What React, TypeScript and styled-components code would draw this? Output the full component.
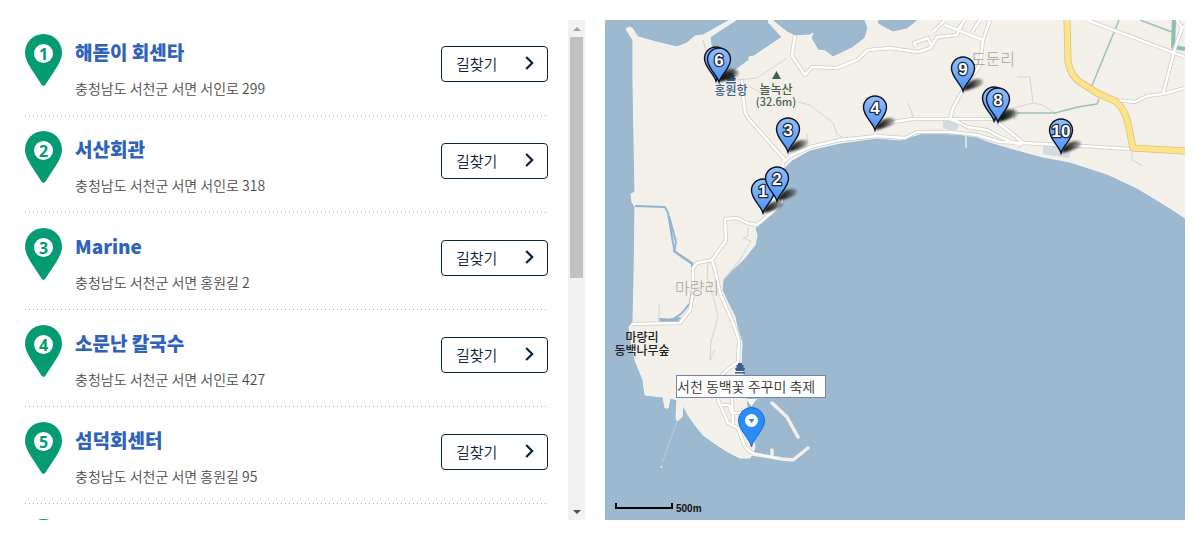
import React, { useCallback, useRef, useState } from "react";
import styled, { createGlobalStyle } from "styled-components";

const GlobalStyle = createGlobalStyle`
  *, *::before, *::after { box-sizing: border-box; }
  body {
    margin: 0;
    background: #fff;
    color: #4c4c4c;
    font-family: "Noto Sans CJK KR", "Noto Sans", sans-serif;
  }
`;

const Page = styled.main`
  display: grid;
  grid-template-columns: minmax(0, 1fr) minmax(0, 1fr);
  gap: 20px;
  padding: 20px 18px 16px 5px;
`;

const ListPanel = styled.section`
  display: flex;
  height: 500px;
`;

const ScrollArea = styled.div`
  flex: 1;
  overflow-y: auto;
  scrollbar-width: none;
`;

const PlaceList = styled.ul`
  display: grid;
  gap: 1px;
  margin: 0;
  padding: 0 20px;
  list-style: none;
`;

const PlaceRow = styled.li`
  display: flex;
  align-items: flex-start;
  gap: 12px;
  height: 96px;
  padding-top: 14px;
  background: repeating-linear-gradient(90deg, #a8a8a8 0 1px, transparent 1px 4px) left bottom / 100% 1px no-repeat;
`;

const PinIcon = styled.svg`
  flex: none;
  display: block;
  width: 38px;
  height: 53px;
  font: 700 16px "Open Sans", sans-serif;
`;

const PlaceInfo = styled.div`
  flex: 1;
  min-width: 0;
`;

const PlaceName = styled.h3`
  margin: 4px 0 10px;
  color: #2f62bb;
  font-size: 19px;
  font-weight: 900;
  line-height: 28px;
`;

const Address = styled.p`
  margin: 0;
  font-size: 14px;
  font-weight: 350;
  line-height: 24px;
`;

const RouteButton = styled.button`
  display: flex;
  align-items: center;
  justify-content: space-between;
  width: 107px;
  height: 36px;
  margin-top: 12px;
  padding: 0 13px 2px 14px;
  border: 1px solid #0b2342;
  border-radius: 4px;
  background: #fff;
  color: #0b1c40;
  font: 350 15px "Noto Sans CJK KR", sans-serif;
  cursor: pointer;
`;

const ScrollBar = styled.div`
  display: flex;
  flex-direction: column;
  width: 17px;
  background: #f1f1f1;
`;

const ScrollStep = styled.button`
  display: grid;
  place-items: center;
  width: 17px;
  height: 17px;
  padding: 0;
  border: 0;
  background: transparent;
`;

const Track = styled.div`
  flex: 1;
  padding: 0 2px;
`;

const Thumb = styled.div`
  height: 241px;
  background: #c1c1c1;
`;

const MapPanel = styled.section`
  position: relative;
  height: 500px;
  overflow: hidden;
  background: #9db9d0;
`;

const MapCanvas = styled.div`
  position: relative;
  width: 580px;
  height: 500px;
  margin: 0 auto;
`;

const MapDrawing = styled.svg`
  display: block;
  overflow: visible;
`;

const InfoWindow = styled.div`
  position: absolute;
  left: 71px;
  top: 355px;
  width: 150px;
  height: 23px;
  border: 1px solid #7485a8;
  background: #fff;
  color: #333;
  font-size: 14px;
  font-weight: 350;
  line-height: 20px;
  white-space: nowrap;
`;

type Place = { name?: string; address?: string };

const places: Place[] = [
  { name: "해돋이 회센타", address: "충청남도 서천군 서면 서인로 299" },
  { name: "서산회관", address: "충청남도 서천군 서면 서인로 318" },
  { name: "Marine", address: "충청남도 서천군 서면 홍원길 2" },
  { name: "소문난 칼국수", address: "충청남도 서천군 서면 서인로 427" },
  { name: "섬덕회센터", address: "충청남도 서천군 서면 홍원길 95" },
  {}, {}, {}, {}, {},
];

function NumberPin({ n }: { n: number }) {
  return (
    <PinIcon viewBox="0 0 38 53" aria-hidden="true">
      <path d="M18.500 0C8 .2 0 8.600 0 18.600C0 24.500 3 29.500 6 34.500L16.500 50.500Q18.500 53.300 20.500 50.500L31 34.500C34 29.500 37 24.500 37 18.600C37 8.600 29 .2 18.500 0Z" fill="#049b73" />
      <circle cx="18.500" cy="19.500" r="9.500" fill="#fff" />
      {n <= 5 && <text x="18.500" y="25.500" textAnchor="middle" fill="#049b73">{n}</text>}
    </PinIcon>
  );
}

function PlaceItem({ n, place }: { n: number; place: Place }) {
  return (
    <PlaceRow>
      <NumberPin n={n} />
      {place.name && (
        <>
          <PlaceInfo>
            <PlaceName>{place.name}</PlaceName>
            <Address>{place.address}</Address>
          </PlaceInfo>
          <RouteButton type="button">
            길찾기
            <svg width="9" height="14" viewBox="0 0 9 14" fill="none" stroke="#0b1f4d" strokeWidth="2.2" aria-hidden="true">
              <path d="M1.200 1L7.200 7L1.200 13" />
            </svg>
          </RouteButton>
        </>
      )}
    </PlaceRow>
  );
}

const LAND =
  "M21 9L24 7L27 8L33 17L55 23L72 27L82 23L90 16L98 15L125 0H131L105 17L107 32L116 48L128 52L144 40L144 37L149 36L177 17L163 2L164 0H167L182 12L190 16L205 15L208 13L206 18L213 30L220 31L228 37L247 28L260 18L263 8L260 0H273L272 3L280 8L288 12L302 9L313 0H580V198L565 188L532 168L502 154L465 142L438 137L405 128L385 122L372 117L352 114L318 113L308 116L295 120L272 118L235 123L205 130L187 140L178 149L176 160L178 176L177 183L162 197L150 208L152 215L150 225L138 240L127 250L118 260L117 270L123 283L130 297L132 307L137 323L136 345L138 355L142 387L150 427L148 433L145 438H135L123 432L112 425L98 415L90 405L83 395L78 385L77 397L72 401L71 397L72 380L65 378L63 388H60L58 377L40 375L38 360L30 340L27 327L24 307L28 302L29 260L30 187L27 182L26 174L30 172L28 62V20Z";

const ROADS = [
  "M526 129L477 126L418 123L395 122L372 115L345 112H312L300 118L272 116L235 120L205 127L185 136L178 142L176 160L173 187L152 205L142 203L132 198L120 199L121 220L107 240L92 243L88 248V273L85 290L75 303L27 304",
  "M107 240L110 250L115 273L128 303L134 320L133 342L122 350L117 355L113 380L123 403L133 408L140 427L147 433",
  "M127 377L128 404M115 385H124L127 393H136V400",
  "M137 60L138 75L140 92L143 98L180 140",
  "M190 16L188 28L187 36L200 55L207 47L232 48L252 40L263 30L285 28L313 32L325 28L332 17L352 15L358 2",
  "M328 12L340 0M340 5L378 20M385 0L378 20L375 45L358 70L348 88L345 99M367 12L375 0M352 10L360 0M311 27L309 23L323 18L326 25",
  "M270 116L272 108L288 102L308 99H345L388 99M345 99L355 103L362 107L382 110L395 117L412 124",
  "M392 102L405 112L418 123L412 126",
  "M482 0L580 37M510 80L530 82L542 76L558 74L580 68M572 0L577 8L570 28L558 74M580 6L577 8",
];

const PATHS = [
  "M412 57L425 57L428 83M410 100L408 88L428 83L438 85L450 93M527 130V140L538 146",
  "M193 82L205 85L228 103L232 114L238 118M303 83L309 99M202 113V122M132 60L152 58L182 38M144 66L158 74",
  "M103 243L102 257L110 283L113 297L106 322L105 340L110 330M143 207V216L138 218L146 221L135 240L118 260M54 285V302M98 20L103 38H107",
];

type MarkerData = { x: number; y: number; label?: string };

const markers: MarkerData[] = [
  { x: 358, y: 71, label: "9" },
  { x: 111, y: 61 },
  { x: 114, y: 62, label: "6" },
  { x: 389, y: 101 },
  { x: 393, y: 102, label: "8" },
  { x: 270, y: 110, label: "4" },
  { x: 183, y: 132, label: "3" },
  { x: 456, y: 133, label: "10" },
  { x: 158, y: 193, label: "1" },
  { x: 172, y: 181, label: "2" },
];

function Marker({ x, y, label }: MarkerData) {
  return (
    <g transform={`translate(${x} ${y})`}>
      <path d="M0 0C2 -6 8 -12 15 -12C23 -12 21 -6 14 -4C9 -2 4 -1 0 0Z" fill="url(#shade)" filter="url(#soft)" />
      <path d="M0 0C-2 -7 -11.500 -14 -11.500 -22.500A11.500 11.500 0 0 1 11.500 -22.500C11.500 -14 2 -7 0 0Z" fill="url(#marker)" stroke="#0c1220" strokeWidth="1.400" />
      {label && (
        <text x="0" y="-16" textAnchor="middle" fontFamily="Liberation Sans, sans-serif" fontSize="17" fontWeight="700" fill="#fff" stroke="#1a2740" strokeWidth="2.500" strokeLinejoin="round" paintOrder="stroke">
          {label}
        </text>
      )}
    </g>
  );
}

function Ferry({ x, y }: { x: number; y: number }) {
  return (
    <g transform={`translate(${x} ${y})`} fill="#3d5f88">
      <path d="M-2 -5H2V-3H3.500V0H5L4 3H-4L-5 0H-3.500V-3H-2Z" />
      <path d="M-5 4H5V5.500H-5Z" />
    </g>
  );
}

function CoastMap() {
  return (
    <MapDrawing width="580" height="500" viewBox="0 0 580 500" role="img" aria-label="지도">
      <defs>
        <linearGradient id="marker" x1="0" y1="0" x2="0" y2="1">
          <stop offset="0" stopColor="#93bffa" />
          <stop offset="1" stopColor="#4d92f5" />
        </linearGradient>
        <linearGradient id="shade" x1="0" y1="0" x2="1" y2="0">
          <stop offset="0" stopColor="#000" />
          <stop offset=".5" stopColor="#222" stopOpacity=".85" />
          <stop offset="1" stopColor="#333" stopOpacity=".3" />
        </linearGradient>
        <filter id="soft" x="-20%" y="-30%" width="150%" height="160%">
          <feGaussianBlur stdDeviation=".9" />
        </filter>
      </defs>
      <path d={LAND} fill="#f2f0e9" stroke="#f7f6f1" />
      <path d="M338 100H353V109L346 111L338 108ZM438 125H450L467 128L464 138L438 134Z" fill="#d2dae2" />
      <path d="M30 186L60 187L63 193L68 223L70 232L87 244V270L85 283L77 293L67 300L55 299" fill="none" stroke="#93b4d0" strokeWidth="2" />
      <path d="M64 196L71 222L69 231L87 243V262" fill="none" stroke="#93b4d0" strokeWidth="2" />
      <path d="M54 298L62 299L76 297L73 302H54Z" fill="#93b4d0" />
      <g fill="none" strokeLinejoin="round">
        {PATHS.map((d) => <path key={d} d={d} stroke="#d5d3cd" />)}
        <path d="M514 0L486 68M494 79L492 84L473 87L450 93L412 93M535 0L567 12" stroke="#9bc4b2" strokeWidth="1.500" />
        <path d="M569 0L568 27L580 29" stroke="#8fbdb5" strokeWidth="4" />
        {ROADS.map((d) => <path key={d} d={d} stroke="#cfcdc8" strokeWidth="4" />)}
        {ROADS.map((d) => <path key={d} d={d} stroke="#fff" strokeWidth="2.500" />)}
        <path d="M462 0L463 42C465 52 469 58 475 62L492 73L510 81C523 91 523 105 528 128L580 131" stroke="#d9c27c" strokeWidth="7" />
        <path d="M462 0L463 42C465 52 469 58 475 62L492 73L510 81C523 91 523 105 528 128L580 131" stroke="#fde48a" strokeWidth="5.500" />
        <path d="M148 434L177 439L188 440L203 428M167 430V437M167 383L182 397L188 408L193 417" stroke="#f2f0e9" strokeWidth="3.500" strokeLinecap="round" />
        <path d="M147 433L172 438" stroke="#fff" strokeWidth="1.500" />
        <path d="M72 401L57 443" stroke="#b9cddd" />
        <path d="M56 446L57 448M361 113V128" stroke="#e2e8ea" strokeWidth="1.500" />
      </g>
      <g textAnchor="middle" fontFamily="Noto Sans CJK KR, sans-serif" fontSize="12">
        <text x="92" y="274" fontSize="16" fontWeight="300" fill="#a5a29c">마량리</text>
        <text x="388" y="45" fontSize="16" fontWeight="300" fill="#a5a29c">도둔리</text>
        <text x="126" y="75" fontWeight="500" fill="#3f6288">홍원항</text>
        <text fontWeight="500" fill="#485d4d">
          <tspan x="171" y="74">놀녹산</tspan>
          <tspan x="171" y="86" fontSize="11">(32.6m)</tspan>
        </text>
        <text fill="#222" fontWeight="500">
          <tspan x="37" y="322">마량리</tspan>
          <tspan x="37" y="335">동백나무숲</tspan>
        </text>
      </g>
      <path d="M171.500 51L176 59H167Z" fill="#485d4d" />
      <Ferry x={126} y={58} />
      <Ferry x={135} y={348} />
      {markers.map((m) => <Marker key={`${m.x}-${m.y}`} {...m} />)}
      <path d="M141 379H152L146.500 386Z" fill="#fff" />
      <path d="M146.500 427C145 419 133.500 410 133.500 400.500A13 13 0 0 1 159.500 400.500C159.500 410 148 419 146.500 427Z" fill="#2a8cf8" stroke="#1e68c4" />
      <circle cx="146.500" cy="400.500" r="6.500" fill="#fff" />
      <path d="M143.500 399H149.500L146.500 403Z" fill="#2a8cf8" />
      <path d="M11 483V488H67V483" fill="none" stroke="#000" strokeWidth="2" />
      <text x="71" y="492" fontFamily="Liberation Sans, sans-serif" fontSize="10" fontWeight="700" fill="#111">500m</text>
    </MapDrawing>
  );
}

export default function App() {
  const area = useRef<HTMLDivElement>(null);
  const [offset, setOffset] = useState(0);

  const handleScroll = useCallback(() => {
    const el = area.current;
    if (el) setOffset((el.scrollTop / Math.max(1, el.scrollHeight - el.clientHeight)) * 225);
  }, []);

  const step = (amount: number) => area.current?.scrollBy({ top: amount });

  return (
    <>
      <GlobalStyle />
      <Page>
        <ListPanel>
          <ScrollArea ref={area} onScroll={handleScroll}>
            <PlaceList>
              {places.map((place, i) => <PlaceItem key={i} n={i + 1} place={place} />)}
            </PlaceList>
          </ScrollArea>
          <ScrollBar>
            <ScrollStep type="button" aria-label="위로" onClick={() => step(-97)}>
              <svg width="8" height="4" viewBox="0 0 8 4" aria-hidden="true"><path d="M0 4L4 0L8 4Z" fill="#a3a3a3" /></svg>
            </ScrollStep>
            <Track>
              <Thumb style={{ transform: `translateY(${offset}px)` }} />
            </Track>
            <ScrollStep type="button" aria-label="아래로" onClick={() => step(97)}>
              <svg width="8" height="4" viewBox="0 0 8 4" aria-hidden="true"><path d="M0 0L4 4L8 0Z" fill="#505050" /></svg>
            </ScrollStep>
          </ScrollBar>
        </ListPanel>
        <MapPanel>
          <MapCanvas>
            <CoastMap />
            <InfoWindow>서천 동백꽃 주꾸미 축제</InfoWindow>
          </MapCanvas>
        </MapPanel>
      </Page>
    </>
  );
}
